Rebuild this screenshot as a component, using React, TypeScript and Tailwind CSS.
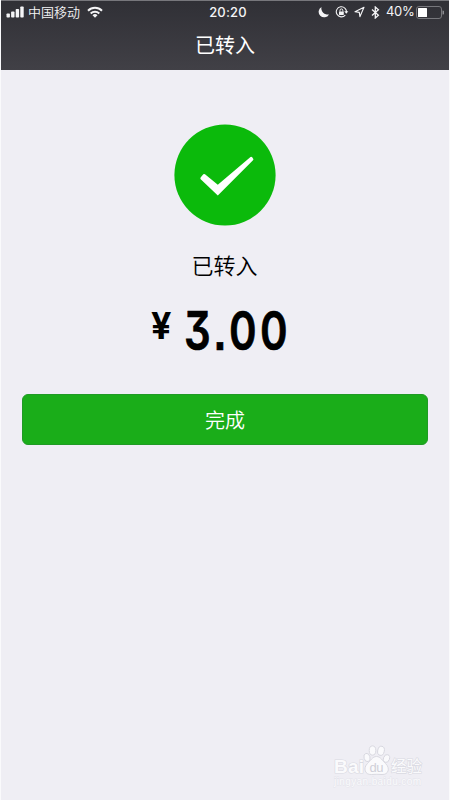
import React from 'react';

const StatusBar = () => {
    return (
        <div className="relative flex h-[22px] items-center justify-between pr-[6px] pl-[5px] text-[#f4f4f6]">
            <div className="flex items-center">
                <svg width="18" height="12" viewBox="0 0 18 12" fill="currentColor">
                    <rect x="0.5" y="7.5" width="3.4" height="4" rx="0.8" />
                    <rect x="5.1" y="5.5" width="3.4" height="6" rx="0.8" />
                    <rect x="9.7" y="3" width="3.4" height="8.5" rx="0.8" />
                    <rect x="14.3" y="0.5" width="3.4" height="11" rx="0.8" />
                </svg>
                <span className="mb-[2px] ml-[4px] text-[13px] leading-none font-[350]">中国移动</span>
                <svg className="ml-[7px]" width="16" height="12" viewBox="0 0 16 12">
                    <g fill="none" stroke="currentColor" strokeWidth="2">
                        <path d="M1 4.7a10 10 0 0 1 14 0" />
                        <path d="M3.7 7.5a6.2 6.2 0 0 1 8.6 0" />
                    </g>
                    <path d="M5.5 9.2a3.6 3.6 0 0 1 5 0L8 11.8z" fill="currentColor" />
                </svg>
            </div>
            <span className="absolute top-[4px] left-[208px] w-[38px] text-center font-[Inter] text-[13px] leading-[14px] font-medium tracking-[0.2px]">
                20:20
            </span>
            <div className="flex items-center">
                <svg width="12" height="12" viewBox="0 0 12 12" fill="currentColor">
                    <path d="M3.5 1A6.2 6.2 0 0 0 11 8.4 5.5 5.5 0 1 1 3.5 1z" />
                </svg>
                <svg className="ml-[5px]" width="14" height="12" viewBox="0 0 14 12">
                    <path
                        d="M10.3 9.1A5.1 5.1 0 1 1 11.4 6.8"
                        fill="none"
                        stroke="currentColor"
                        strokeWidth="1.1"
                    />
                    <path d="M9.3 5.3h4l-2 2.5z" fill="currentColor" />
                    <rect x="4" y="5.4" width="4.8" height="3.5" rx="0.4" fill="currentColor" />
                    <path d="M5 5.6V4.3a1.4 1.4 0 0 1 2.8 0v1.3" fill="none" stroke="currentColor" />
                </svg>
                <svg className="ml-[5px]" width="11" height="12" viewBox="0 0 11 12">
                    <path
                        d="M10 1.2 1 5.8l4.3.6.6 4.3z"
                        fill="none"
                        stroke="currentColor"
                        strokeWidth="1.1"
                        strokeLinejoin="round"
                    />
                </svg>
                <svg className="ml-[6px]" width="9" height="13" viewBox="0 0 9 13">
                    <path
                        d="m1 3.5 6.4 5.8L4.3 12V1l3.1 2.7L1 9.5"
                        fill="none"
                        stroke="currentColor"
                        strokeWidth="1.3"
                    />
                </svg>
                <span className="mb-px ml-[6px] w-[28px] font-[Inter] text-[13px] leading-none tracking-[-0.3px]">
                    40%
                </span>
                <svg className="ml-[2px]" width="28" height="13" viewBox="0 0 28 13">
                    <rect x="0.5" y="0.5" width="25" height="12" rx="2.5" fill="none" stroke="#77777c" />
                    <rect x="2" y="2" width="9" height="9" rx="0.5" fill="#ffffff" />
                    <path d="M26.5 4.5a2 2 0 0 1 0 4z" fill="#8b8b90" />
                </svg>
            </div>
        </div>
    );
};

const Watermark = () => {
    return (
        <div className="absolute top-[744px] left-[332px] h-[46px] w-[92px] text-[#fafafc]">
            <svg width="92" height="46" viewBox="0 0 92 46">
                <g fill="currentColor" stroke="#d6d6de" strokeWidth="0.9">
                    <ellipse cx="34" cy="13.5" rx="3" ry="4.2" transform="rotate(-15 34 13.5)" />
                    <ellipse cx="39.5" cy="6.5" rx="3.3" ry="4.6" />
                    <ellipse cx="48" cy="6.8" rx="3.3" ry="4.6" transform="rotate(12 48 6.8)" />
                    <ellipse cx="53.5" cy="14.5" rx="3" ry="4" transform="rotate(20 53.5 14.5)" />
                    <path d="M43.5 12.5c4 0 6 4.3 9 7 5 4.5 3 11.5-3.5 11-3.6-.3-7-.3-10.6 0-6.5.5-8.6-6.5-3.9-11 3-2.7 5-7 9-7z" />
                </g>
                <g stroke="#dadae2" strokeWidth="1.2" paintOrder="stroke" fill="currentColor">
                    <text x="1" y="28.5" fontSize="19" fontFamily="Liberation Sans" fontWeight="bold" textLength="30">
                        Bai
                    </text>
                    <text x="58" y="28" fontSize="15.5" fontFamily="Noto Sans CJK SC" textLength="31">
                        经验
                    </text>
                    <text
                        x="1"
                        y="41"
                        fontSize="10"
                        fontFamily="Liberation Sans"
                        stroke="#e4e4eb"
                        strokeWidth="0.9"
                        textLength="87"
                    >
                        jingyan.baidu.com
                    </text>
                </g>
                <text x="36.5" y="27.5" fontSize="13" fontFamily="Liberation Sans" fill="#d0d0d8" textLength="14">
                    du
                </text>
            </svg>
        </div>
    );
};

const App = () => {
    return (
        <div className="relative h-[800px] w-[450px] overflow-hidden border-x border-[#fafafc] bg-[#efeef4] font-['Noto_Sans_CJK_SC',sans-serif]">
            <div className="-mx-px h-[70px] border-t border-l border-[#77777c] bg-linear-to-b from-[#303036] to-[#414046]">
                <StatusBar />
                <h1 className="-ml-px pt-[10px] text-center text-[20px] leading-[24px] font-normal text-white">
                    已转入
                </h1>
            </div>

            <div className="-mx-px flex flex-col items-center px-[22px] pt-[54px]">
                <svg width="102" height="102" viewBox="0 0 102 102">
                    <circle cx="51" cy="51" r="50.6" fill="#0bba0b" />
                    <path
                        d="M26.6 53.5 29.3 50.3Q30 49.6 31 50.3L43.8 60.8 76.5 33Q77.5 32.500 78.2 33.3L79.3 35Q79.7 35.6 79 36.3L43.8 71.6 26.7 55.3Q26 54.4 26.6 53.5z"
                        fill="#ffffff"
                    />
                </svg>
                <p className="mt-[23px] mr-px text-[22px] leading-[30px] font-[350] text-black">已转入</p>
                <div className="relative mt-[24px] h-[52px] w-full font-[Inter] font-bold text-black">
                    <span className="absolute top-[4px] left-[129px] origin-left scale-x-[.97] text-[37px] leading-[37px]">
                        ¥
                    </span>
                    <span className="absolute top-0 left-[162px] origin-left scale-x-[.775] text-[54px] leading-[55px] font-semibold tracking-[4.5px] [-webkit-text-stroke:0.7px_black] [font-feature-settings:'cv09','ss07']">
                        3.00
                    </span>
                </div>
                <button className="mt-[39px] h-[51px] w-full rounded-[6px] border border-[#209a25] bg-[#1aad19] text-[20px] leading-[49px] font-[350] text-white">
                    完成
                </button>
            </div>
            <Watermark />
        </div>
    );
};

export default App;
